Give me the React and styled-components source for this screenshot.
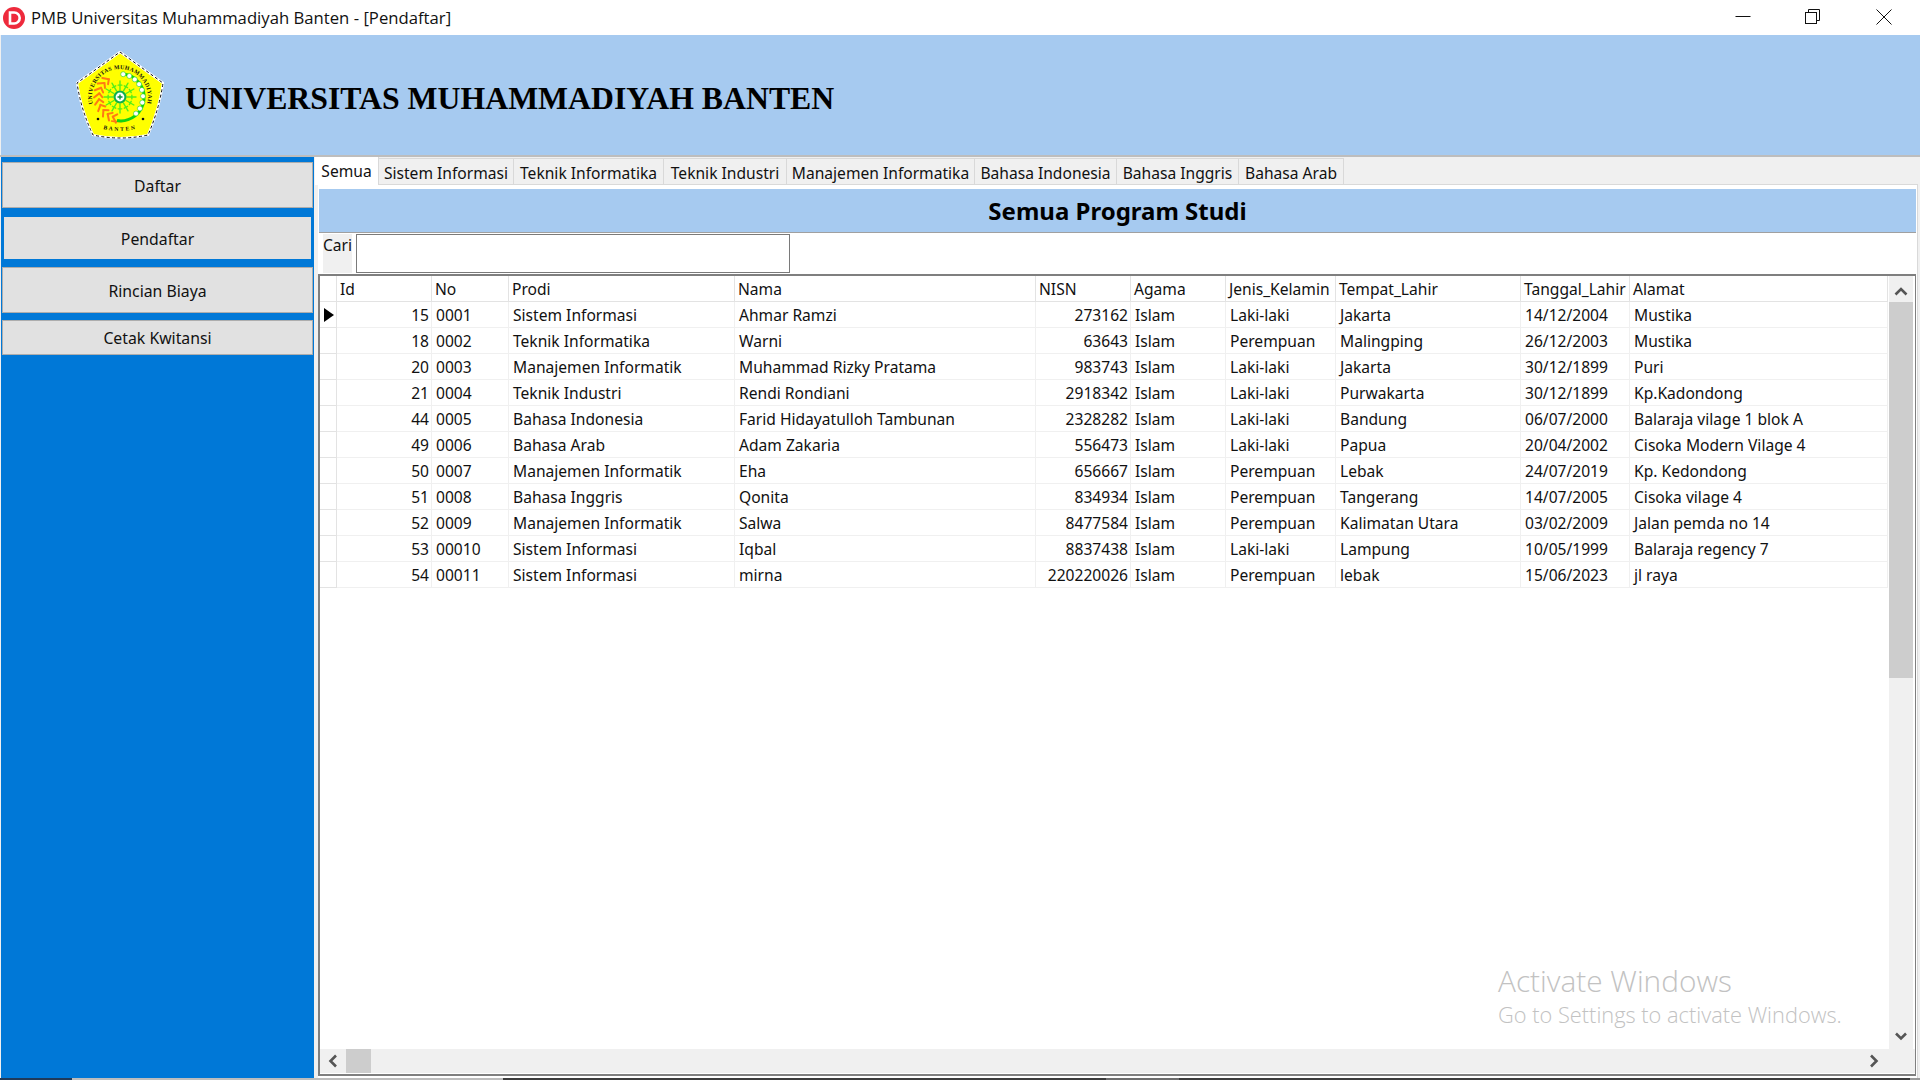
import React from 'react'
import styled, { createGlobalStyle } from 'styled-components'

const GRID_COLUMNS = '17px 95px 77px 226px 301px 95px 95px 110px 185px 109px 258px'
const TABS = [
  { label: 'Semua', width: 64 },
  { label: 'Sistem Informasi', width: 135 },
  { label: 'Teknik Informatika', width: 150 },
  { label: 'Teknik Industri', width: 123 },
  { label: 'Manajemen Informatika', width: 188 },
  { label: 'Bahasa Indonesia', width: 142 },
  { label: 'Bahasa Inggris', width: 122 },
  { label: 'Bahasa Arab', width: 105 },
]
const MENU = [
  { label: 'Daftar', height: 46 },
  { label: 'Pendaftar', height: 42, active: true },
  { label: 'Rincian Biaya', height: 46 },
  { label: 'Cetak Kwitansi', height: 35 },
]
const COLUMNS = ['Id', 'No', 'Prodi', 'Nama', 'NISN', 'Agama', 'Jenis_Kelamin', 'Tempat_Lahir', 'Tanggal_Lahir', 'Alamat']
const ROWS = [
  ['15', '0001', 'Sistem Informasi', 'Ahmar Ramzi', '273162', 'Islam', 'Laki-laki', 'Jakarta', '14/12/2004', 'Mustika'],
  ['18', '0002', 'Teknik Informatika', 'Warni', '63643', 'Islam', 'Perempuan', 'Malingping', '26/12/2003', 'Mustika'],
  ['20', '0003', 'Manajemen Informatik', 'Muhammad Rizky Pratama', '983743', 'Islam', 'Laki-laki', 'Jakarta', '30/12/1899', 'Puri'],
  ['21', '0004', 'Teknik Industri', 'Rendi Rondiani', '2918342', 'Islam', 'Laki-laki', 'Purwakarta', '30/12/1899', 'Kp.Kadondong'],
  ['44', '0005', 'Bahasa Indonesia', 'Farid Hidayatulloh Tambunan', '2328282', 'Islam', 'Laki-laki', 'Bandung', '06/07/2000', 'Balaraja vilage 1 blok A'],
  ['49', '0006', 'Bahasa Arab', 'Adam Zakaria', '556473', 'Islam', 'Laki-laki', 'Papua', '20/04/2002', 'Cisoka Modern Vilage 4'],
  ['50', '0007', 'Manajemen Informatik', 'Eha', '656667', 'Islam', 'Perempuan', 'Lebak', '24/07/2019', 'Kp. Kedondong'],
  ['51', '0008', 'Bahasa Inggris', 'Qonita', '834934', 'Islam', 'Perempuan', 'Tangerang', '14/07/2005', 'Cisoka vilage 4'],
  ['52', '0009', 'Manajemen Informatik', 'Salwa', '8477584', 'Islam', 'Perempuan', 'Kalimatan Utara', '03/02/2009', 'Jalan pemda no 14'],
  ['53', '00010', 'Sistem Informasi', 'Iqbal', '8837438', 'Islam', 'Laki-laki', 'Lampung', '10/05/1999', 'Balaraja regency 7'],
  ['54', '00011', 'Sistem Informasi', 'mirna', '220220026', 'Islam', 'Perempuan', 'lebak', '15/06/2023', 'jl raya'],
]
const RIGHT_ALIGNED = [0, 4]

// points on the seal's inner circle, angle in degrees from the top, clockwise
const onSeal = (deg, r) => {
  const a = (deg * Math.PI) / 180
  return [45 + r * Math.sin(a), 47 - r * Math.cos(a)]
}
const BEADS = [8, 24, 40, 56, 72, 88, 104, 120, 136]
const LEAVES = [200, 216, 232, 248, 264, 280, 296, 312, 328]
const RAYS = [0, 30, 60, 90, 120, 150, 180, 210, 240, 270, 300, 330]

function Logo() {
  const outline = 'M45 2 L88 33 Q84 60 73 85 Q45 91 18 85 Q6 60 2 33 Z'
  return (
    <svg width="90" height="90" viewBox="0 0 90 90">
      <defs>
        <path id="seal-top" d="M 19.7 59 A 28 28 0 1 1 70.3 59" />
        <path id="seal-bottom" d="M 25 78 Q 45 84 65 78" />
      </defs>
      <path d={outline} fill="#ffff00" stroke="#fff" strokeWidth="2.2" strokeLinejoin="round" />
      <path d={outline} fill="none" stroke="#111" strokeWidth="1" strokeDasharray="3 2.4" strokeLinejoin="round" />
      <text fontFamily="Liberation Serif, serif" fontWeight="700" fontSize="5.8" fill="#111" letterSpacing="0.35">
        <textPath href="#seal-top" startOffset="50%" textAnchor="middle">UNIVERSITAS MUHAMMADIYAH</textPath>
      </text>
      <text fontFamily="Liberation Serif, serif" fontWeight="700" fontSize="5.6" fill="#111" letterSpacing="1.8">
        <textPath href="#seal-bottom" startOffset="50%" textAnchor="middle">BANTEN</textPath>
      </text>
      <circle cx="23" cy="69" r="1.3" fill="#111" />
      <circle cx="68" cy="69" r="1.3" fill="#111" />

      <path d="M 36 71 Q 42 72 50 71" fill="none" stroke="#ff7a14" strokeWidth="1.6" />
      <g stroke="#ff7a14" strokeWidth="2" strokeLinecap="round">
        {LEAVES.map((deg) => {
          const [x1, y1] = onSeal(deg, 21)
          const [x2, y2] = onSeal(deg - 11, 26)
          const [x3, y3] = onSeal(deg - 11, 17.5)
          return (
            <g key={deg}>
              <line x1={x1} y1={y1} x2={x2} y2={y2} />
              <line x1={x1} y1={y1} x2={x3} y2={y3} />
            </g>
          )
        })}
      </g>

      <path d="M 48 24 A 23.5 23.5 0 1 1 42 70.6" fill="none" stroke="#12d412" strokeWidth="3" />
      {BEADS.map((deg) => {
        const [x, y] = onSeal(deg, 23)
        return <circle key={deg} cx={x} cy={y} r="2.5" fill="#fff" stroke="#18d018" strokeWidth="0.6" />
      })}

      <g stroke="#55ee18" strokeWidth="1.4" strokeLinecap="round">
        {RAYS.map((deg) => {
          const [x1, y1] = onSeal(deg, 7)
          const [x2, y2] = onSeal(deg, 16)
          const [x3, y3] = onSeal(deg - 9, 12)
          const [x4, y4] = onSeal(deg + 9, 12)
          return (
            <g key={deg}>
              <line x1={x1} y1={y1} x2={x2} y2={y2} />
              <line x1={x3} y1={y3} x2={x4} y2={y4} />
            </g>
          )
        })}
      </g>
      <circle cx="45" cy="47" r="6.5" fill="#0fb04a" />
      <circle cx="45" cy="47" r="4.4" fill="#fff" />
      <path d="M42.5 47h5M45 44.5v5" stroke="#0c8f3c" strokeWidth="1.4" />
    </svg>
  )
}

function Chevron({ points }) {
  return (
    <svg width="14" height="14" viewBox="0 0 14 14">
      <polyline points={points} fill="none" stroke="#555" strokeWidth="2.6" />
    </svg>
  )
}

export default function App() {
  return (
    <Window>
      <GlobalStyle />
      <TitleBar>
        <AppIcon>
          <svg width="22" height="22" viewBox="0 0 22 22">
            <circle cx="11" cy="11" r="11" fill="#ee2a3c" />
            <path d="M7 5.5h4.2a5.5 5.5 0 0 1 0 11H7z" fill="none" stroke="#fff" strokeWidth="2.6" />
          </svg>
        </AppIcon>
        <TitleText>PMB Universitas Muhammadiyah Banten - [Pendaftar]</TitleText>
        <WindowButtons>
          <WindowButton $w={66}>
            <svg width="16" height="16" viewBox="0 0 16 16"><line x1="0.5" y1="7.5" x2="15.5" y2="7.5" stroke="#111" /></svg>
          </WindowButton>
          <WindowButton $w={73}>
            <svg width="16" height="16" viewBox="0 0 16 16" fill="none" stroke="#111">
              <rect x="0.5" y="3.5" width="11" height="11" />
              <path d="M3.5 3.5v-3h11v11h-3" />
            </svg>
          </WindowButton>
          <WindowButton $w={70}>
            <svg width="16" height="16" viewBox="0 0 16 16"><path d="M0.5 0.5l15 15M15.5 0.5l-15 15" stroke="#111" /></svg>
          </WindowButton>
        </WindowButtons>
      </TitleBar>

      <Banner>
        <Logo />
        <BannerTitle>UNIVERSITAS MUHAMMADIYAH BANTEN</BannerTitle>
      </Banner>

      <Body>
        <Sidebar>
          {MENU.map((item) => (
            <MenuButton key={item.label} $height={item.height} $active={item.active}>{item.label}</MenuButton>
          ))}
        </Sidebar>

        <Content>
          <TabStrip>
            {TABS.map((tab, i) => (
              <Tab key={tab.label} $width={tab.width} $active={i === 0}>{tab.label}</Tab>
            ))}
          </TabStrip>

          <Pane>
            <PaneHeading>Semua Program Studi</PaneHeading>
            <SearchRow>
              <SearchLabel>Cari</SearchLabel>
              <SearchInput />
            </SearchRow>

            <DataGrid>
              <GridMain>
                <GridRows>
                  <Row>
                    <IndicatorCell />
                    {COLUMNS.map((col) => (
                      <HeaderCell key={col}>{col}</HeaderCell>
                    ))}
                  </Row>
                  {ROWS.map((row, r) => (
                    <Row key={row[0]}>
                      <IndicatorCell>{r === 0 && <Pointer />}</IndicatorCell>
                      {row.map((value, c) => (
                        <Cell key={c} $right={RIGHT_ALIGNED.includes(c)}>{value}</Cell>
                      ))}
                    </Row>
                  ))}
                </GridRows>
                <VScroll>
                  <VButton $top><Chevron points="1.5,10.5 7,5 12.5,10.5" /></VButton>
                  <VThumb />
                  <ScrollSpacer />
                  <VButton><Chevron points="2,4.5 7,9.5 12,4.5" /></VButton>
                </VScroll>
                <Watermark>
                  <WatermarkTitle>Activate Windows</WatermarkTitle>
                  <WatermarkText>Go to Settings to activate Windows.</WatermarkText>
                </Watermark>
              </GridMain>
              <HScroll>
                <HButton><Chevron points="10,1.5 4.5,7 10,12.5" /></HButton>
                <HThumb />
                <ScrollSpacer />
                <HButton $end><Chevron points="4,1.5 9.5,7 4,12.5" /></HButton>
                <HCorner />
              </HScroll>
            </DataGrid>
          </Pane>
        </Content>
      </Body>
      <BottomStrip>
        <StripPart $w={72} $c="#1f3a5a" />
        <StripPart $w={431} $c="#bdbdbd" />
        <StripPart $w={603} $c="#3c3c3c" />
        <StripPart $w={73} $c="#6e6e6e" />
        <StripPart $w={731} $c="#3c3c3c" />
        <StripPart $w={10} $c="#9a9a9a" />
      </BottomStrip>
    </Window>
  )
}

const GlobalStyle = createGlobalStyle`
  html, body {
    margin: 0;
    padding: 0;
    background: #fff;
    overflow: hidden;
  }
  * {
    box-sizing: border-box;
  }
`

const Window = styled.div`
  width: 1920px;
  height: 1080px;
  display: flex;
  flex-direction: column;
  background: #f0f0f0;
  font-family: 'Noto Sans', 'Open Sans', sans-serif;
  color: #000;
  overflow: hidden;
`

const TitleBar = styled.div`
  height: 35px;
  flex: none;
  display: flex;
  align-items: center;
  background: #fff;
  padding-left: 3px;
`

const AppIcon = styled.div`
  width: 22px;
  height: 22px;
  display: flex;
  margin-right: 6px;
`

const TitleText = styled.div`
  font-family: 'Open Sans', sans-serif;
  font-size: 16.7px;
  color: #111;
`

const WindowButtons = styled.div`
  margin-left: auto;
  display: flex;
  align-self: flex-start;
  padding-right: 1px;
`

const WindowButton = styled.div`
  width: ${(p) => p.$w}px;
  height: 34px;
  display: flex;
  align-items: center;
  justify-content: center;
`

const Banner = styled.div`
  height: 120px;
  flex: none;
  display: flex;
  align-items: center;
  margin-left: 1px;
  padding-left: 74px;
  gap: 20px;
  background: #a6caf0;
`

const BannerTitle = styled.div`
  margin-top: 7px;
  font-family: 'Liberation Serif', serif;
  font-weight: 700;
  font-size: 31.75px;
  color: #000;
`

const Body = styled.div`
  flex: 1;
  min-height: 0;
  display: flex;
  border-top: 2px solid #bdbdbd;
`

const Sidebar = styled.div`
  width: 313px;
  margin-left: 1px;
  flex: none;
  display: flex;
  flex-direction: column;
  gap: 7px;
  padding: 5px 1px 0 1px;
  background: #0078d7;
`

const MenuButton = styled.div`
  height: ${(p) => p.$height}px;
  margin: ${(p) => (p.$active ? '2px 2px 1px' : '0')};
  padding-top: 1px;
  display: flex;
  flex: none;
  align-items: center;
  justify-content: center;
  background: #e1e1e1;
  border: ${(p) => (p.$active ? 'none' : '1px solid #adadad')};
  font-size: 15.8px;
  color: #111;
`

const Content = styled.div`
  flex: 1;
  min-width: 0;
  display: flex;
  flex-direction: column;
  padding-left: 4px;
  padding-right: 2px;
`

const TabStrip = styled.div`
  height: 27px;
  flex: none;
  display: flex;
  align-items: flex-start;
  margin-left: -3px;
  position: relative;
  z-index: 1;
`

const Tab = styled.div`
  width: ${(p) => p.$width}px;
  height: ${(p) => (p.$active ? '28px' : '26px')};
  margin-top: ${(p) => (p.$active ? '0' : '1px')};
  padding-top: ${(p) => (p.$active ? '0' : '2px')};
  flex: none;
  display: flex;
  align-items: center;
  justify-content: center;
  font-size: 15.6px;
  color: #111;
  white-space: nowrap;
  background: ${(p) => (p.$active ? '#fff' : '#f0f0f0')};
  border-right: 1px solid #d9d9d9;
  border-top: ${(p) => (p.$active ? 'none' : '1px solid #d9d9d9')};
`

const Pane = styled.div`
  flex: 1;
  min-height: 0;
  display: flex;
  flex-direction: column;
  background: #fff;
  border-top: 1px solid #d9d9d9;
  border-right: 1px solid #d9d9d9;
  padding: 4px 1px 2px 0;
`

const PaneHeading = styled.div`
  height: 44px;
  flex: none;
  display: flex;
  align-items: center;
  justify-content: center;
  background: #a6caf0;
  border-bottom: 1px solid #a0a0a0;
  font-size: 24px;
  font-weight: 700;
  color: #000;
  margin-left: 1px;
`

const SearchRow = styled.div`
  height: 41px;
  flex: none;
  display: flex;
  align-items: flex-start;
  gap: 4px;
  padding: 1px 0 0 5px;
  background: #fff;
`

const SearchLabel = styled.div`
  width: 29px;
  height: 39px;
  background: #f0f0f0;
  font-size: 15.6px;
  color: #111;
`

const SearchInput = styled.div`
  width: 434px;
  height: 39px;
  background: #fff;
  border: 1px solid #7a7a7a;
`

const DataGrid = styled.div`
  flex: 1;
  min-height: 0;
  display: flex;
  flex-direction: column;
  border: 2px solid #7f7f7f;
  border-right-width: 1px;
  background: #fff;
`

const GridMain = styled.div`
  flex: 1;
  min-height: 0;
  display: flex;
  position: relative;
`

const GridRows = styled.div`
  flex: 1;
  min-width: 0;
`

const Row = styled.div`
  display: grid;
  grid-template-columns: ${GRID_COLUMNS};
  height: 26px;
`

const Cell = styled.div`
  height: 26px;
  padding: 0 2px 0 4px;
  display: flex;
  align-items: center;
  justify-content: ${(p) => (p.$right ? 'flex-end' : 'flex-start')};
  font-size: 15.6px;
  color: #111;
  white-space: nowrap;
  overflow: hidden;
  border-right: 1px solid #f0f0f0;
  border-bottom: 1px solid #f0f0f0;
`

const HeaderCell = styled(Cell)`
  padding-left: 3px;
  border-right-color: #e3e3e3;
  border-bottom-color: #e3e3e3;
`

const IndicatorCell = styled.div`
  height: 26px;
  display: flex;
  align-items: center;
  padding-left: 4px;
  border-right: 1px solid #e3e3e3;
  border-bottom: 1px solid #e3e3e3;
`

const Pointer = styled.div`
  width: 0;
  height: 0;
  border-top: 7.5px solid transparent;
  border-bottom: 7.5px solid transparent;
  border-left: 10px solid #000;
`

const VScroll = styled.div`
  width: 24px;
  margin-right: 2px;
  flex: none;
  display: flex;
  flex-direction: column;
  background: #f0f0f0;
`

const VButton = styled.div`
  height: 26px;
  flex: none;
  padding-top: ${(p) => (p.$top ? '3px' : '0')};
  display: flex;
  align-items: center;
  justify-content: center;
`

const VThumb = styled.div`
  height: 376px;
  flex: none;
  background: #cdcdcd;
`

const ScrollSpacer = styled.div`
  flex: 1;
`

const HScroll = styled.div`
  height: 24px;
  margin-bottom: 1px;
  flex: none;
  display: flex;
  background: #f0f0f0;
`

const HButton = styled.div`
  width: 26px;
  padding-right: ${(p) => (p.$end ? '4px' : '0')};
  flex: none;
  display: flex;
  align-items: center;
  justify-content: center;
`

const HThumb = styled.div`
  width: 25px;
  flex: none;
  background: #cdcdcd;
`

const HCorner = styled.div`
  width: 26px;
  flex: none;
`

const Watermark = styled.div`
  position: absolute;
  left: 1178px;
  bottom: 19px;
  font-family: 'Open Sans', sans-serif;
  color: #c2c2c2;
  white-space: nowrap;
`

const WatermarkTitle = styled.div`
  font-size: 29.8px;
  font-weight: 300;
  line-height: 38px;
`

const WatermarkText = styled.div`
  font-size: 21.8px;
  font-weight: 300;
  line-height: 30px;
`

const BottomStrip = styled.div`
  height: 2px;
  flex: none;
  display: flex;
`

const StripPart = styled.div`
  width: ${(p) => p.$w}px;
  background: ${(p) => p.$c};
`
